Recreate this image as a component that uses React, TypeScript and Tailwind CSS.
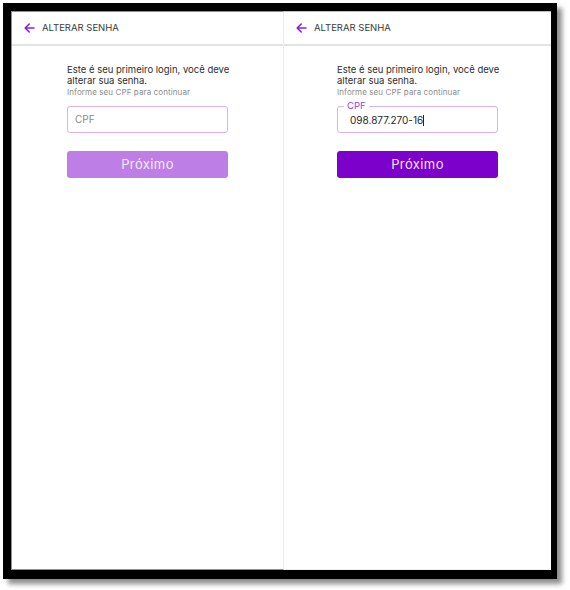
import React from "react";

function BackArrow() {
  return (
    <svg width="11" height="10" viewBox="0 0 11 10" fill="none" className="shrink-0">
      <path d="M10 5H1.5M5.2 1L1.2 5l4 4" stroke="#8a1fe0" strokeWidth="1.6" strokeLinecap="round" strokeLinejoin="round" />
    </svg>
  );
}

function Header() {
  return (
    <div className="h-[34px] flex items-center gap-[7px] pl-[12px] border-b-2 border-[#e3e3e3]">
      <BackArrow />
      <span className="text-[9.5px] text-[#3a3a3a]">ALTERAR SENHA</span>
    </div>
  );
}

function Intro() {
  return (
    <>
      <p className="text-[9.5px] leading-[11px] text-[#2e2e2e] whitespace-nowrap">
        Este é seu primeiro login, você deve
        <br />
        alterar sua senha.
      </p>
      <p className="mt-[1px] text-[8px] leading-[10px] tracking-[0.1px] text-[#8c8c8c] whitespace-nowrap">
        Informe seu CPF para continuar
      </p>
    </>
  );
}

function Screen({ filled }: { filled: boolean }) {
  return (
    <div className="flex flex-col h-full">
      <Header />
      <div className="flex justify-center pt-[18px]">
        <div className="w-[161px]">
          <Intro />
          <div className="relative mt-[9px] h-[27px] rounded-[3px] border-[1.5px] border-[#d8b2f3] flex items-center">
            {filled ? (
              <>
                <span className="absolute -top-[7px] left-[6px] px-[3px] bg-white text-[9.5px] leading-[12px] text-[#9b3fdb]">
                  CPF
                </span>
                <span className="pl-[12px] pt-[1px] text-[10px] text-[#262626]">098.877.270-16</span>
                <span className="w-px h-[11px] bg-[#222] mt-[1px]" />
              </>
            ) : (
              <span className="pl-[7px] text-[10px] text-[#8a8a8a]">CPF</span>
            )}
          </div>
          <button
            className={
              filled
                ? "mt-[18px] w-full h-[27px] rounded-[3px] bg-[#7b01cb] text-[13px] tracking-[0.4px] text-[#f1e4fb]"
                : "mt-[18px] w-full h-[27px] rounded-[3px] bg-[#bd7fe6] text-[13px] tracking-[0.4px] text-[#f4eafc]"
            }
          >
            Próximo
          </button>
        </div>
      </div>
    </div>
  );
}

export default function App() {
  return (
    <div className="w-[570px] h-[590px] bg-white pl-[3px] pt-[3px]" style={{ fontFamily: "Inter, 'Open Sans', sans-serif" }}>
      <div className="w-[554px] h-[576px] border-l-8 border-t-[8px] border-r-[6px] border-b-[9px] border-black shadow-[5px_5px_5px_rgba(0,0,0,0.45)] bg-white flex">
        <div className="w-[273px] h-full border-t border-l border-b border-[#8f8f8f] border-r border-r-[#ececec]">
          <Screen filled={false} />
        </div>
        <div className="flex-1 h-full border-t border-t-[#bdbdbd] border-b border-b-[#eeeeee]">
          <Screen filled />
        </div>
      </div>
    </div>
  );
}
